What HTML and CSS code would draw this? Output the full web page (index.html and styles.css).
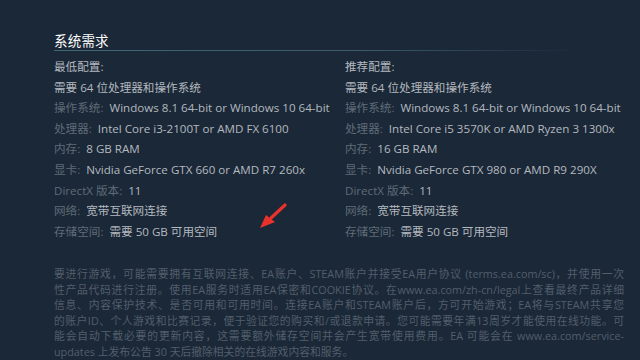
FILE: index.html
```html
<!DOCTYPE html>
<html lang="zh-CN">
<head>
<meta charset="utf-8">
<link rel="stylesheet" href="styles.css">
</head>
<body>
<div class="page">
  <div class="title">系统需求</div>
  <div class="cols">
    <div class="col">
      <div class="row head">最低配置:</div>
      <div class="row head">需要 64 位处理器和操作系统</div>
      <div class="row"><span class="lbl">操作系统:</span> Windows 8.1 64-bit or Windows 10 64-bit</div>
      <div class="row"><span class="lbl">处理器:</span> Intel Core i3-2100T or AMD FX 6100</div>
      <div class="row"><span class="lbl">内存:</span> 8 GB RAM</div>
      <div class="row"><span class="lbl">显卡:</span> Nvidia GeForce GTX 660 or AMD R7 260x</div>
      <div class="row"><span class="lbl">DirectX 版本:</span> 11</div>
      <div class="row"><span class="lbl">网络:</span> 宽带互联网连接</div>
      <div class="row"><span class="lbl">存储空间:</span> 需要 50 GB 可用空间</div>
    </div>
    <div class="col">
      <div class="row head">推荐配置:</div>
      <div class="row head">需要 64 位处理器和操作系统</div>
      <div class="row"><span class="lbl">操作系统:</span> Windows 8.1 64-bit or Windows 10 64-bit</div>
      <div class="row"><span class="lbl">处理器:</span> Intel Core i5 3570K or AMD Ryzen 3 1300x</div>
      <div class="row"><span class="lbl">内存:</span> 16 GB RAM</div>
      <div class="row"><span class="lbl">显卡:</span> Nvidia GeForce GTX 980 or AMD R9 290X</div>
      <div class="row"><span class="lbl">DirectX 版本:</span> 11</div>
      <div class="row"><span class="lbl">网络:</span> 宽带互联网连接</div>
      <div class="row"><span class="lbl">存储空间:</span> 需要 50 GB 可用空间</div>
    </div>
  </div>
  <div class="note">
    <div class="ln">要进行游戏，可能需要拥有互联网连接、EA账户、STEAM账户并接受EA用户协议 (terms.ea.com/sc)，并使用一次</div>
    <div class="ln">性产品代码进行注册。使用EA服务时适用EA保密和COOKIE协议。在www.ea.com/zh-cn/legal上查看最终产品详细</div>
    <div class="ln">信息、内容保护技术、是否可用和可用时间。连接EA账户和STEAM账户后，方可开始游戏；EA将与STEAM共享您</div>
    <div class="ln">的账户ID、个人游戏和比赛记录，便于验证您的购买和/或退款申请。您可能需要年满13周岁才能使用在线功能。可</div>
    <div class="ln">能会自动下载必要的更新内容，这需要额外储存空间并会产生宽带使用费用。EA 可能会在 www.ea.com/service-</div>
    <div class="ln last">updates 上发布公告 30 天后撤除相关的在线游戏内容和服务。</div>
  </div>
  <svg class="arrow" width="30" height="28" viewBox="0 0 30 28">
    <path d="M27 2 L13 15" stroke="#e8322b" stroke-width="3.2" stroke-linecap="round" fill="none"/>
    <path d="M2 25 L8 12 L17 19 Z" fill="#e8322b"/>
  </svg>
</div>
</body>
</html>
```
FILE: styles.css
```css
html, body {
  margin: 0;
  padding: 0;
  background: #1b2838;
}
.page {
  position: relative;
  width: 570px;
  padding: 32px 16px 0 54px;
  font-family: "Open Sans", "Noto Sans CJK SC", sans-serif;
}
.title {
  font-size: 13.5px;
  line-height: 18px;
  color: #ffffff;
  letter-spacing: 0.2px;
  padding-bottom: 2px;
}
.title::after {
  content: "";
  display: block;
  height: 1px;
  width: 526px;
  background: linear-gradient(to right, #3f6878 0%, #3a5b6b 60%, rgba(27, 40, 56, 0) 100%);
}
.cols {
  display: grid;
  grid-template-columns: 291px 1fr;
  margin-top: 4px;
}
.row {
  font-size: 11.6px;
  line-height: 20.6px;
  color: #b3b9bf;
  white-space: nowrap;
}
.lbl {
  color: #5f6b77;
  margin-right: 3px;
}
.note {
  margin-top: 24px;
  font-size: 10.8px;
  line-height: 15.5px;
  color: #525e6b;
}
.ln {
  text-align: justify;
  text-align-last: justify;
  white-space: nowrap;
}
.ln.last {
  text-align-last: left;
}
.arrow {
  position: absolute;
  left: 258px;
  top: 203px;
}
```
